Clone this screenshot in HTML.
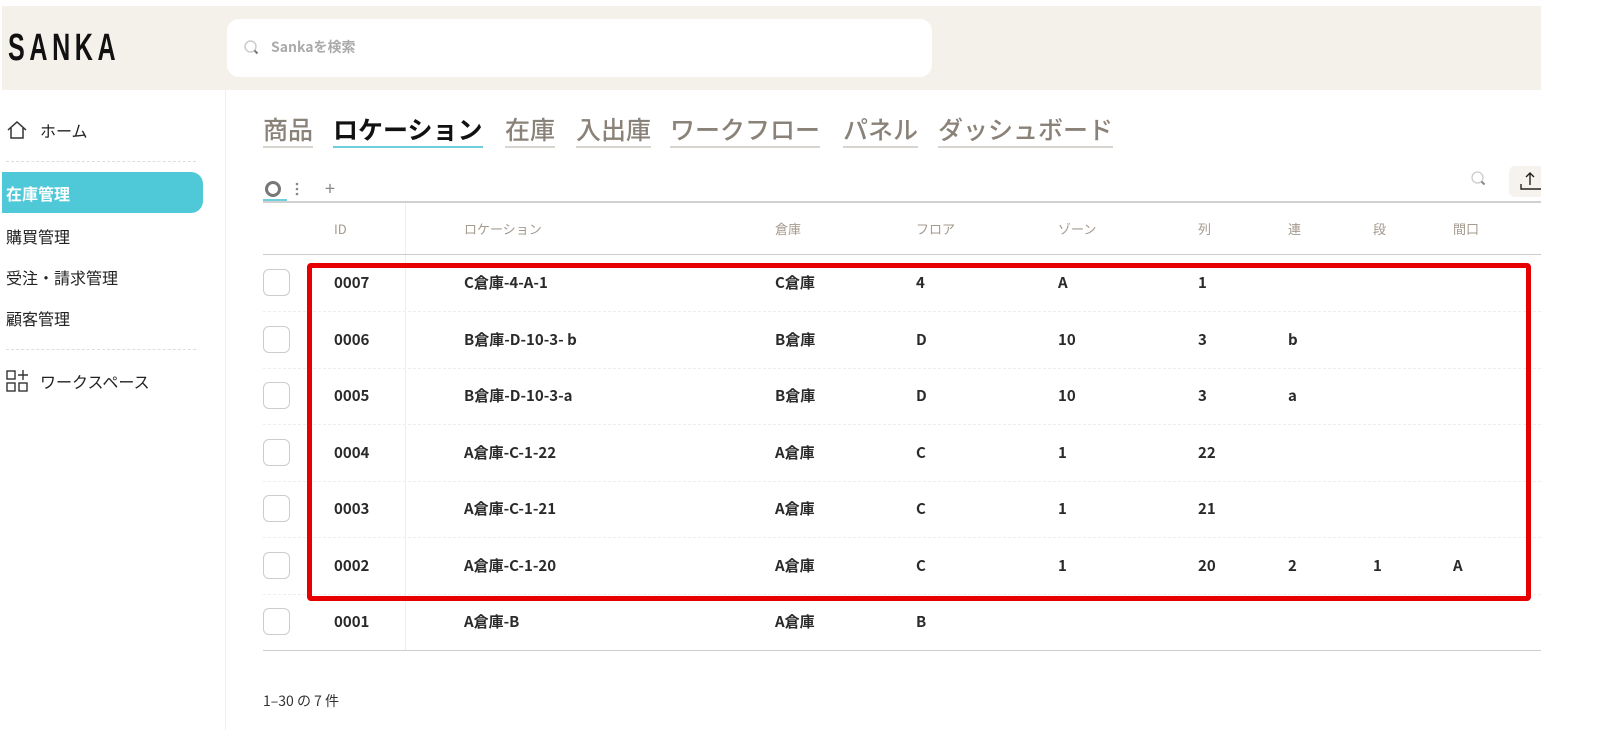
<!DOCTYPE html>
<html><head><meta charset="utf-8"><style>
*{margin:0;padding:0;box-sizing:border-box}
body{width:1604px;height:748px;background:#fff;font-family:"Noto Sans CJK JP","Liberation Sans",sans-serif;position:relative;overflow:hidden;color:#222}
.a{position:absolute;white-space:nowrap}
.hdr{left:2px;top:6px;width:1539px;height:84px;background:#f4f0ea}
.logo{left:8px;top:26px;font-size:38px;line-height:44px;font-weight:700;letter-spacing:7px;color:#111;font-family:"Liberation Sans",sans-serif;transform:scaleX(.66);transform-origin:left}
.search{left:227px;top:19px;width:705px;height:58px;background:#fff;border-radius:12px}
.side{font-size:16px;line-height:22px;color:#222}
.dash{height:0;border-top:1px dashed #ddd}
.tab{top:112px;font-size:25px;font-weight:500;color:#8a8278;padding-bottom:0;border-bottom:2px solid #d8d4ce;line-height:34px}
.th{top:219px;font-size:13px;line-height:20px;color:#a49a8e}
.td{font-size:15px;line-height:22px;font-weight:700;color:#2a2a2a}
.cb{left:263px;width:27px;height:27px;border:1.5px solid #ccc;border-radius:6px}
</style></head><body>
<div class="a hdr"></div>
<div class="a logo">SANKA</div>
<div class="a search"></div>
<svg class="a" style="left:243px;top:39px" width="18" height="18" viewBox="0 0 18 18"><circle cx="7.5" cy="7.5" r="5.5" fill="none" stroke="#ccc" stroke-width="1.5"/><path d="M11.5 11.5l3 3" stroke="#777" stroke-width="2"/></svg>
<div class="a" style="left:271px;top:37px;font-size:14px;line-height:20px;color:#aaa;font-weight:600">Sankaを検索</div>

<div class="a" style="left:225px;top:90px;width:1px;height:640px;background:#eee"></div>
<svg class="a" style="left:6px;top:119px" width="22" height="22" viewBox="0 0 22 22"><path d="M2 11L11 3l9 8M5 9v10h12V9" fill="none" stroke="#333" stroke-width="1.5"/></svg>
<div class="a side" style="left:40px;top:119px">ホーム</div>
<div class="a dash" style="left:6px;top:161px;width:190px"></div>
<div class="a" style="left:2px;top:172px;width:201px;height:41px;background:#4fc8d8;border-radius:0 12px 12px 0"></div>
<div class="a side" style="left:6px;top:182px;color:#fff;font-weight:600">在庫管理</div>
<div class="a side" style="left:6px;top:225px">購買管理</div>
<div class="a side" style="left:6px;top:266px">受注・請求管理</div>
<div class="a side" style="left:6px;top:307px">顧客管理</div>
<div class="a dash" style="left:6px;top:349px;width:190px"></div>
<svg class="a" style="left:6px;top:369px" width="24" height="24" viewBox="0 0 24 24" fill="none" stroke="#333" stroke-width="1.4"><rect x="1" y="2" width="8" height="8"/><rect x="1" y="14" width="8" height="8"/><rect x="13" y="14" width="8" height="8"/><path d="M17 1v10M12 6h10"/></svg>
<div class="a side" style="left:40px;top:370px">ワークスペース</div>

<div class="a tab" style="left:263px">商品</div>
<div class="a tab" style="left:333px;color:#111;font-weight:700;border-bottom-color:#6fcfdc">ロケーション</div>
<div class="a tab" style="left:505px">在庫</div>
<div class="a tab" style="left:576px">入出庫</div>
<div class="a tab" style="left:670px">ワークフロー</div>
<div class="a tab" style="left:843px">パネル</div>
<div class="a tab" style="left:938px">ダッシュボード</div>

<svg class="a" style="left:264px;top:180px" width="60" height="18"><circle cx="9" cy="9" r="6.5" fill="none" stroke="#777" stroke-width="3"/><circle cx="33" cy="4" r="1.3" fill="#888"/><circle cx="33" cy="9" r="1.3" fill="#888"/><circle cx="33" cy="14" r="1.3" fill="#888"/></svg>
<div class="a" style="left:325px;top:177px;font-size:18px;line-height:22px;color:#888">+</div>
<div class="a" style="left:263px;top:199px;width:24px;height:3px;background:#6fcfdc"></div>
<div class="a" style="left:263px;top:201px;width:1278px;height:2px;background:#d0d0d0"></div>
<svg class="a" style="left:1470px;top:170px" width="18" height="18"><circle cx="7.5" cy="7.5" r="5.5" fill="none" stroke="#ccc" stroke-width="1.3"/><path d="M11.5 11.5l3 3" stroke="#888" stroke-width="2"/></svg>
<div class="a" style="left:1509px;top:166px;width:32px;height:31px;background:#f6f3ee;border-radius:6px 0 0 6px"></div>
<svg class="a" style="left:1520px;top:170px" width="21" height="22" fill="none" stroke="#222" stroke-width="1.4"><path d="M10 3v12M6 7l4-4 4 4M1 14v5h20"/></svg>

<div class="a" style="left:405px;top:203px;width:1px;height:448px;background:#eee"></div>
<div class="a th" style="left:334px">ID</div>
<div class="a th" style="left:464px">ロケーション</div>
<div class="a th" style="left:775px">倉庫</div>
<div class="a th" style="left:916px">フロア</div>
<div class="a th" style="left:1058px">ゾーン</div>
<div class="a th" style="left:1198px">列</div>
<div class="a th" style="left:1288px">連</div>
<div class="a th" style="left:1373px">段</div>
<div class="a th" style="left:1453px">間口</div>
<div class="a" style="left:263px;top:254px;width:1278px;height:1px;background:#ccc"></div>

<div id="rows"></div>
<script>
const d=[["0007","C倉庫-4-A-1","C倉庫","4","A","1","","",""],["0006","B倉庫-D-10-3- b","B倉庫","D","10","3"," b","",""],["0005","B倉庫-D-10-3-a","B倉庫","D","10","3","a","",""],["0004","A倉庫-C-1-22","A倉庫","C","1","22","","",""],["0003","A倉庫-C-1-21","A倉庫","C","1","21","","",""],["0002","A倉庫-C-1-20","A倉庫","C","1","20","2","1","A"],["0001","A倉庫-B","A倉庫","B","","","","",""]];
const xs=[334,464,775,916,1058,1198,1288,1373,1453];let h="";
d.forEach((r,i)=>{const c=283+i*56.5;h+=`<div class="a cb" style="top:${c-14}px"></div>`;r.forEach((v,j)=>{h+=`<div class="a td" style="left:${xs[j]}px;top:${c-11}px">${v}</div>`});if(i<6)h+=`<div class="a dash" style="left:263px;top:${c+28}px;width:1278px;border-color:#eee"></div>`});
document.getElementById("rows").innerHTML=h;
</script>
<div class="a" style="left:263px;top:650px;width:1278px;height:1px;background:#ccc"></div>
<div class="a" style="left:307px;top:263px;width:1224px;height:338px;border:5px solid #e60000;border-radius:4px"></div>
<div class="a" style="left:263px;top:691px;font-size:14px;line-height:20px;color:#333">1–30 の 7 件</div>
</body></html>
